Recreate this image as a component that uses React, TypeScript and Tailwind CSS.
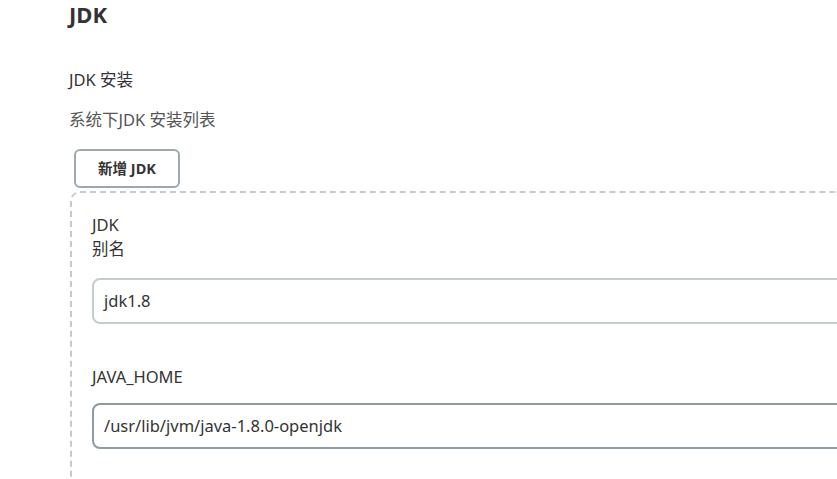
export default function App() {
  return (
    <div
      className="w-[837px] h-[479px] overflow-hidden bg-white text-[#333]"
      style={{ fontFamily: '"Noto Sans", "Noto Sans CJK SC", sans-serif' }}
    >
      <div className="pl-[69px]">
        <h1 className="text-[22px] font-bold leading-[28px] text-[#333]">JDK</h1>
        <div className="mt-[40px] text-[16.5px] leading-[24px]">JDK 安装</div>
        <div className="mt-[16px] text-[16.5px] leading-[24px] text-[#555]">系统下JDK 安装列表</div>
        <div className="mt-[17px] pl-[5px]">
          <button className="h-[39px] w-[106px] rounded-[6px] border-2 border-[#9ea8ae] bg-white text-[14.5px] font-bold text-[#333]">
            新增 JDK
          </button>
        </div>
        <div className="mt-[3px] ml-[1px] w-[900px] rounded-tl-[10px] border-l-2 border-t-2 border-dashed border-[#c5cacd] pl-[20px] pt-[20px] pb-[40px]">
          <div className="text-[16.5px] leading-[24px]">JDK</div>
          <div className="text-[16.5px] leading-[24px]">别名</div>
          <div className="mt-[17px] box-border flex h-[46px] w-[800px] items-center rounded-[8px] border-2 border-[#c5ccd0] px-[10px] text-[16.5px]">
            jdk1.8
          </div>
          <div className="mt-[41px] text-[16.5px] leading-[24px]">JAVA_HOME</div>
          <div className="mt-[14px] box-border flex h-[46px] w-[800px] items-center rounded-[8px] border-2 border-[#8e9ba3] px-[10px] text-[16.5px]">
            /usr/lib/jvm/java-1.8.0-openjdk
          </div>
        </div>
      </div>
    </div>
  );
}
